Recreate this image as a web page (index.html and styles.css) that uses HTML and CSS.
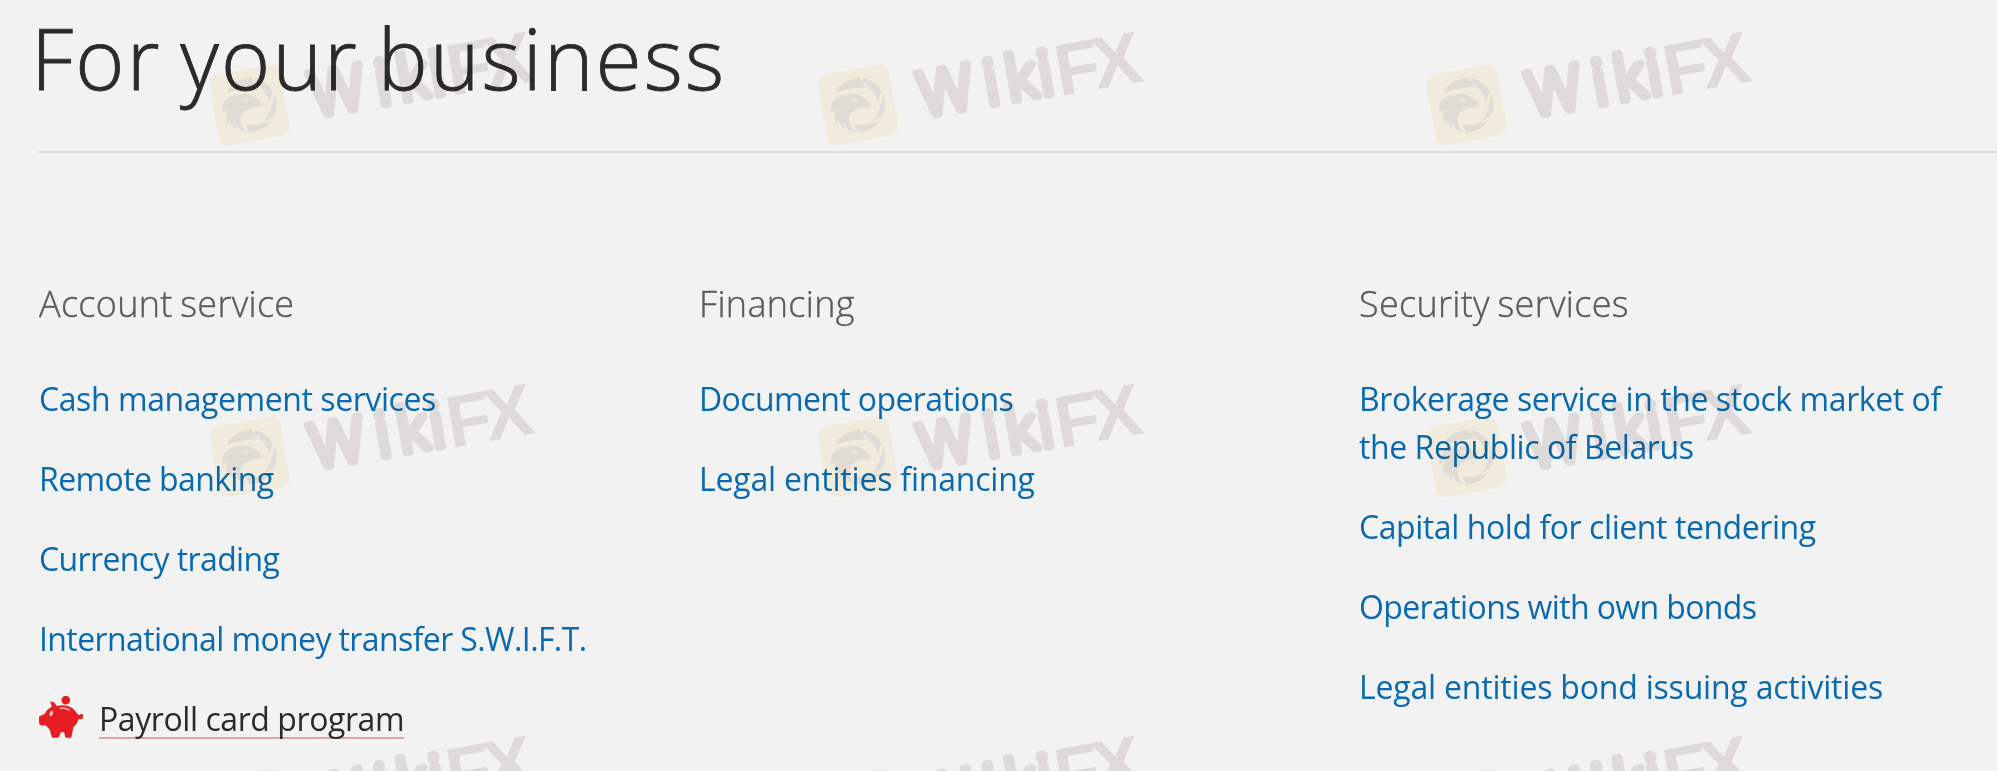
FILE: index.html
```html
<!DOCTYPE html>
<html lang="en">
<head>
<meta charset="utf-8">
<title>For your business</title>
<link rel="stylesheet" href="styles.css">
</head>
<body>
<main class="page">
  <h1 class="title">For your business</h1>
  <div class="columns">
    <section class="column">
      <h2 class="heading">Account service</h2>
      <ul class="links">
        <li><a class="link" href="#">Cash management services</a></li>
        <li><a class="link tight" href="#">Remote banking</a></li>
        <li><a class="link tight" href="#">Currency trading</a></li>
        <li><a class="link tight" href="#">International money transfer S.W.I.F.T.</a></li>
        <li class="featured">
          <svg class="pig" viewBox="0 0 133 126" aria-hidden="true">
            <g fill="#e51e24">
              <circle cx="81" cy="12" r="13"/>
              <path d="M33 17Q48 15 53 30Q84 22 103 38Q112 46 117 55Q124 59 127 53L133 55V67Q125 71 119 69Q118 82 104 94L98 124Q97 126 94 126H83Q80 126 79 123L76 109H66L61 123Q60 126 57 126H42Q39 126 38 122L32 100Q26 96 21 89H9Q0 88 0 78V62L8 58Q15 57 18 52Q25 39 38 32Q38 24 33 17Z"/>
            </g>
            <path d="M65 37Q78 34 91 41" fill="none" stroke="#f7a9ab" stroke-width="5" stroke-linecap="round"/>
            <ellipse cx="37" cy="52" rx="5" ry="9" fill="#f9c3c4" transform="rotate(15 37 52)"/>
          </svg>
          <a class="link dark" href="#">Payroll card program</a>
        </li>
      </ul>
    </section>
    <section class="column">
      <h2 class="heading">Financing</h2>
      <ul class="links">
        <li><a class="link tight" href="#">Document operations</a></li>
        <li><a class="link loose" href="#">Legal entities financing</a></li>
      </ul>
    </section>
    <section class="column">
      <h2 class="heading">Security services</h2>
      <ul class="links">
        <li><a class="link" href="#">Brokerage service in the stock market of<br>the Republic of Belarus</a></li>
        <li><a class="link" href="#">Capital hold for client tendering</a></li>
        <li><a class="link tight" href="#">Operations with own bonds</a></li>
        <li><a class="link loose" href="#">Legal entities bond issuing activities</a></li>
      </ul>
    </section>
  </div>
</main>

<svg class="watermark" viewBox="0 0 1997 771" aria-hidden="true">
  <defs>
    <g id="mark">
      <rect x="-36" y="-36" width="72" height="72" rx="9" fill="#fef8e9" transform="rotate(-10)"/>
      <!-- aperture ring -->
      <g fill="#eee7e1">
        <path d="M-22-15Q-13-27 2-27L8-18Q-7-18-22-12Z"/>
        <path d="M5-27Q17-25 23-14L20-2Q17-15 5-23Z"/>
        <path d="M25-10Q30 3 23 12L15 16Q23 5 25-10Z"/>
        <path d="M21 16Q14 27 0 27L-4 20Q9 20 21 16Z"/>
        <!-- eagle head -->
        <path d="M-26-2Q-22-10-12-10Q-1-13 5-8Q12-5 12 2Q5 2-1 4Q-10 8-9 16Q-8 23-3 27Q-12 25-15 17Q-15 22-12 25Q-19 21-20 14L-21 19Q-26 12-22 5L-27 8Q-28 3-26-2Z"/>
      </g>
      <path fill="#fef8e9" d="M-8-5Q-3-7 0-4Q-4-2-8-5Z"/>
      <g transform="rotate(-10)" fill="#ebe6e6">
        <text class="mark-round" y="22.5" x="61.5 128 150 183">Wiki</text>
        <text class="mark-plain" y="26" x="200 238">FX</text>
      </g>
    </g>
    <g id="mark-row">
      <use href="#mark" x="249.5"/>
      <use href="#mark" x="858"/>
      <use href="#mark" x="1466.5"/>
    </g>
  </defs>
  <use href="#mark-row" y="105"/>
  <use href="#mark-row" y="457"/>
  <use href="#mark-row" y="809"/>
</svg>
</body>
</html>
```
FILE: styles.css
```css
body {
  margin: 0;
  height: 771px;
  overflow: hidden;
  position: relative;
  background: #f2f2f2;
  font-family: "Open Sans", "Noto Sans", sans-serif;
}

.page {
  padding: 8px 0 0 39px;
}

.title {
  margin: 0;
  padding-bottom: 43px;
  border-bottom: 2px solid #dcdcdc;
  color: #2b2b2b;
  font-size: 84px;
  font-weight: 300;
  line-height: 100px;
  letter-spacing: 2.1px;
  word-spacing: -5px;
  text-indent: -8px;
  -webkit-text-stroke: 0.8px #2b2b2b;
}

.columns {
  display: grid;
  grid-template-columns: repeat(3, 660px);
  padding-top: 127px;
}

.heading {
  margin: 0 0 47px;
  color: #5c5c5c;
  font-size: 36px;
  font-weight: 300;
  line-height: 48px;
  letter-spacing: 0.3px;
  word-spacing: -2px;
  -webkit-text-stroke: 0.4px #5c5c5c;
}

.links {
  display: flex;
  flex-direction: column;
  gap: 32px;
  margin: 0;
  padding: 0;
  list-style: none;
  font-size: 32px;
  line-height: 48px;
}

.link {
  color: #0a6ab0;
  text-decoration: none;
  letter-spacing: -0.43px;
  white-space: nowrap;
}

.tight {
  letter-spacing: -0.61px;
}

.loose {
  letter-spacing: -0.2px;
}

.featured {
  display: flex;
  align-items: flex-start;
  gap: 16px;
}

.pig {
  width: 44px;
  height: 42px;
  margin-top: 1px;
}

.dark {
  color: #2b2b2b;
  text-decoration: underline 2px #e2a3a6;
  text-underline-offset: 6px;
  text-decoration-skip-ink: none;
}

.watermark {
  position: absolute;
  inset: 0;
  width: 1997px;
  height: 771px;
  pointer-events: none;
  mix-blend-mode: multiply;
}

.mark-round {
  font: 300 61px "Open Sans", sans-serif;
  stroke: #ebe6e6;
  stroke-width: 8px;
  stroke-linejoin: round;
}

.mark-plain {
  font: 700 73px "Liberation Sans", sans-serif;
}
```
